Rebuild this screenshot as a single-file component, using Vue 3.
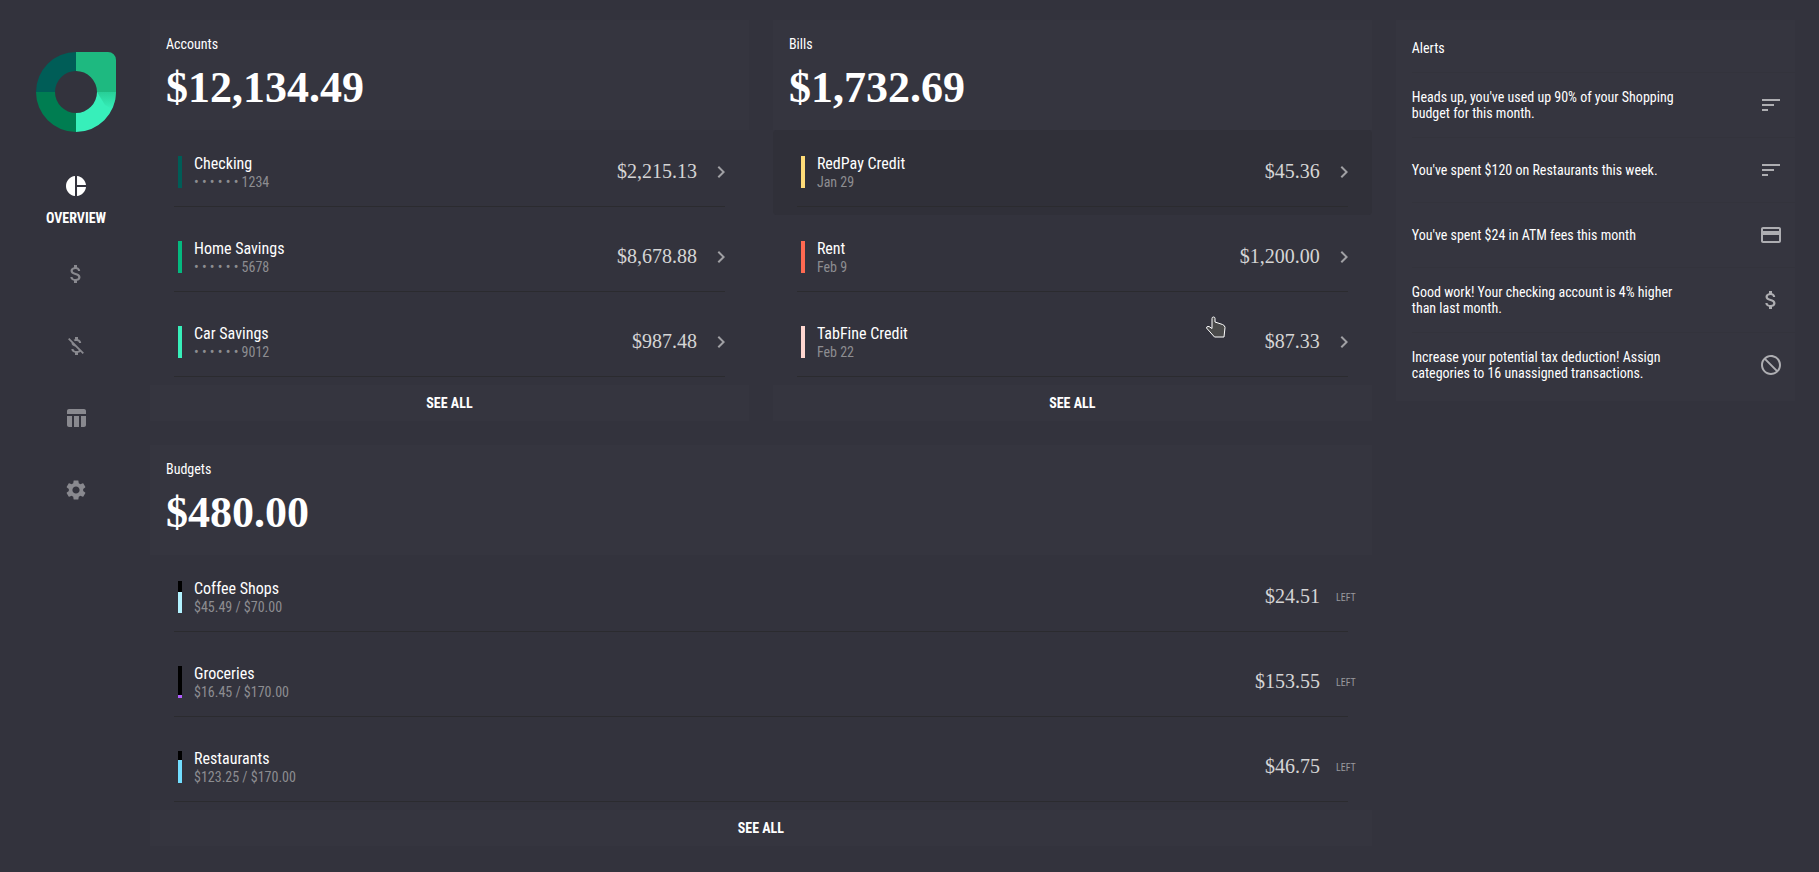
<script setup>
const nav = [
  { id: 'accounts', label: 'Accounts', icon: 'money' },
  { id: 'bills', label: 'Bills', icon: 'moneyOff' },
  { id: 'budgets', label: 'Budgets', icon: 'table' },
  { id: 'settings', label: 'Settings', icon: 'settings' }
]

const icons = {
  pie: 'M11 2v20c-5.07-.5-9-4.79-9-10s3.93-9.5 9-10zm2.03 0v8.99H22c-.47-4.74-4.24-8.52-8.97-8.99zm0 11.01V22c4.74-.47 8.5-4.25 8.97-8.99h-8.97z',
  money: 'M11.8 10.9c-2.27-.59-3-1.2-3-2.15 0-1.09 1.01-1.85 2.7-1.85 1.78 0 2.44.85 2.5 2.1h2.21c-.07-1.72-1.12-3.3-3.21-3.81V3h-3v2.16c-1.94.42-3.5 1.68-3.5 3.61 0 2.31 1.91 3.46 4.7 4.13 2.5.6 3 1.48 3 2.41 0 .69-.49 1.79-2.7 1.79-2.06 0-2.87-.92-2.98-2.1h-2.2c.12 2.19 1.76 3.42 3.68 3.83V21h3v-2.15c1.95-.37 3.5-1.5 3.5-3.55 0-2.84-2.43-3.81-4.7-4.4z',
  moneyOff: 'M12.5 6.9c1.78 0 2.44.85 2.5 2.1h2.21c-.07-1.72-1.12-3.3-3.21-3.81V3h-3v2.16c-.53.12-1.03.3-1.48.54l1.47 1.47c.41-.17.91-.27 1.51-.27zM5.33 4.06L4.06 5.33 7.5 8.77c0 2.08 1.56 3.21 3.91 3.91l3.51 3.51c-.34.48-1.05.91-2.42.91-2.06 0-2.87-.92-2.98-2.1h-2.2c.12 2.19 1.76 3.42 3.68 3.83V21h3v-2.15c.96-.18 1.82-.55 2.45-1.12l2.22 2.22 1.27-1.27L5.33 4.06z',
  table: 'M10 10.02h5V21h-5V10.02zM17 21h3c1.1 0 2-.9 2-2v-9h-5v11zm3-18H5c-1.1 0-2 .9-2 2v3h19V5c0-1.1-.9-2-2-2zM3 19c0 1.1.9 2 2 2h3V10H3v9z',
  settings: 'M19.14 12.94c.04-.3.06-.61.06-.94 0-.32-.02-.64-.07-.94l2.03-1.58c.18-.14.23-.41.12-.61l-1.92-3.32c-.12-.22-.37-.29-.59-.22l-2.39.96c-.5-.38-1.03-.7-1.62-.94l-.36-2.54c-.04-.24-.24-.41-.48-.41h-3.84c-.24 0-.43.17-.47.41l-.36 2.54c-.59.24-1.13.57-1.62.94l-2.39-.96c-.22-.08-.47 0-.59.22L2.74 8.87c-.12.21-.08.47.12.61l2.03 1.58c-.05.3-.09.63-.09.94s.02.64.07.94l-2.03 1.58c-.18.14-.23.41-.12.61l1.92 3.32c.12.22.37.29.59.22l2.39-.96c.5.38 1.03.7 1.62.94l.36 2.54c.05.24.24.41.48.41h3.84c.24 0 .44-.17.47-.41l.36-2.54c.59-.24 1.13-.56 1.62-.94l2.39.96c.22.08.47 0 .59-.22l1.92-3.32c.12-.22.07-.47-.12-.61l-2.01-1.58zM12 15.6c-1.98 0-3.6-1.62-3.6-3.6s1.62-3.6 3.6-3.6 3.6 1.62 3.6 3.6-1.62 3.6-3.6 3.6z',
  sort: 'M3 18h6v-2H3v2zM3 6v2h18V6H3zm0 7h12v-2H3v2z',
  card: 'M20 4H4c-1.11 0-1.99.89-1.99 2L2 18c0 1.11.89 2 2 2h16c1.11 0 2-.89 2-2V6c0-1.11-.89-2-2-2zm0 14H4v-6h16v6zm0-10H4V6h16v2z',
  blocked: 'M12 2C6.48 2 2 6.48 2 12s4.48 10 10 10 10-4.48 10-10S17.52 2 12 2zM4 12c0-1.85.63-3.55 1.69-4.9L16.9 18.31C15.55 19.37 13.85 20 12 20c-4.42 0-8-3.58-8-8zm14.31 4.9L7.1 5.69C8.45 4.63 10.15 4 12 4c4.42 0 8 3.58 8 8 0 1.85-.63 3.55-1.69 4.9z',
  chevron: 'M10 6L8.59 7.41 13.17 12l-4.58 4.59L10 18l6-6z'
}

const cards = [
  {
    title: 'Accounts',
    total: '$12,134.49',
    rows: [
      { name: 'Checking', detail: '• • • • • • 1234', amount: '$2,215.13', color: '#005d57' },
      { name: 'Home Savings', detail: '• • • • • • 5678', amount: '$8,678.88', color: '#04b97f' },
      { name: 'Car Savings', detail: '• • • • • • 9012', amount: '$987.48', color: '#37efba' }
    ]
  },
  {
    title: 'Bills',
    total: '$1,732.69',
    rows: [
      { name: 'RedPay Credit', detail: 'Jan 29', amount: '$45.36', color: '#ffdc78', active: true },
      { name: 'Rent', detail: 'Feb 9', amount: '$1,200.00', color: '#ff6951' },
      { name: 'TabFine Credit', detail: 'Feb 22', amount: '$87.33', color: '#ffd7d0' }
    ]
  },
  {
    title: 'Budgets',
    total: '$480.00',
    wide: true,
    rows: [
      { name: 'Coffee Shops', detail: '$45.49 / $70.00', amount: '$24.51', color: '#b2f2ff', used: 45.49 / 70 },
      { name: 'Groceries', detail: '$16.45 / $170.00', amount: '$153.55', color: '#b15dff', used: 16.45 / 170 },
      { name: 'Restaurants', detail: '$123.25 / $170.00', amount: '$46.75', color: '#72deff', used: 123.25 / 170 }
    ]
  }
]

const alerts = [
  { text: "Heads up, you've used up 90% of your Shopping budget for this month.", icon: 'sort' },
  { text: "You've spent $120 on Restaurants this week.", icon: 'sort' },
  { text: "You've spent $24 in ATM fees this month", icon: 'card' },
  { text: 'Good work! Your checking account is 4% higher than last month.', icon: 'money' },
  { text: 'Increase your potential tax deduction! Assign categories to 16 unassigned transactions.', icon: 'blocked' }
]

const barStyle = (row) => ({
  height: `${(row.used ?? 1) * 100}%`,
  backgroundColor: row.color
})
</script>

<template>
  <div class="app">
    <nav class="sidebar">
      <svg class="logo" viewBox="0 0 80 80" aria-hidden="true">
        <defs>
          <linearGradient id="fold" x1="0" y1="0" x2="0" y2="1">
            <stop offset="0" stop-color="#1eb980" stop-opacity="0.6" />
            <stop offset="1" stop-color="#1eb980" stop-opacity="0" />
          </linearGradient>
        </defs>
        <path fill="#005d57" d="M40 0A40 40 0 0 0 0 40H19A21 21 0 0 1 40 19Z" />
        <path fill="#1eb980" d="M40 0H72A8 8 0 0 1 80 8V40H61A21 21 0 0 0 40 19Z" />
        <path fill="#007d51" d="M0 40A40 40 0 0 0 40 80V61A21 21 0 0 1 19 40Z" />
        <path fill="#37efba" d="M80 40A40 40 0 0 1 40 80V61A21 21 0 0 0 61 40Z" />
        <path fill="url(#fold)" d="M61 40H80A40 40 0 0 1 76 57L69 53Z" />
      </svg>
      <a class="nav-item current" href="#overview">
        <svg class="icon" viewBox="0 0 24 24" aria-hidden="true"><path :d="icons.pie" /></svg>
        <span>OVERVIEW</span>
      </a>
      <a v-for="item in nav" :key="item.id" class="nav-item" :href="`#${item.id}`" :aria-label="item.label">
        <svg class="icon" viewBox="0 0 24 24" aria-hidden="true"><path :d="icons[item.icon]" /></svg>
      </a>
    </nav>

    <main class="board">
      <section v-for="card in cards" :key="card.title" class="card" :class="{ wide: card.wide }">
        <header class="card-head">
          <h2 class="card-title">{{ card.title }}</h2>
          <p class="total">{{ card.total }}</p>
        </header>
        <ul class="rows">
          <li v-for="row in card.rows" :key="row.name">
            <a class="row" :class="{ active: row.active }" href="#detail">
              <span class="row-main">
                <span class="bar"><span class="fill" :style="barStyle(row)"></span></span>
                <span class="label">
                  <span class="name">{{ row.name }}</span>
                  <span class="detail">{{ row.detail }}</span>
                </span>
                <span class="amount">{{ row.amount }}</span>
                <span v-if="card.wide" class="left">LEFT</span>
                <svg v-else class="icon chevron" viewBox="0 0 24 24" aria-hidden="true"><path :d="icons.chevron" /></svg>
              </span>
            </a>
          </li>
        </ul>
        <button class="see-all" type="button">SEE ALL</button>
      </section>

      <aside class="alerts">
        <h2 class="alerts-title">Alerts</h2>
        <ul class="alert-list">
          <li v-for="alert in alerts" :key="alert.text" class="alert">
            <p>{{ alert.text }}</p>
            <svg class="icon" viewBox="0 0 24 24" aria-hidden="true"><path :d="icons[alert.icon]" /></svg>
          </li>
        </ul>
      </aside>
    </main>

    <svg class="pointer" viewBox="0 0 22 22" aria-hidden="true">
      <path d="M7 12.5V2.5Q7 1 8.5 1T10 2.5V6L17.5 8.5Q20 9.5 20 11.5L19 21H9.5L1.5 12Q1.5 10 4 10.5Z" />
    </svg>
  </div>
</template>

<style>
body {
  background: #33333d;
}
</style>

<style scoped>
.app {
  position: relative;
  display: grid;
  grid-template-columns: 150px minmax(0, 1fr);
  min-height: 100vh;
  background: #33333d;
  color: #fff;
  font-family: "Roboto Condensed", "Liberation Sans Narrow", Roboto, sans-serif;
  font-size: 14px;
  font-weight: 400;
}

h2,
p,
ul {
  margin: 0;
  padding: 0;
}

ul {
  list-style: none;
}

a {
  color: inherit;
  text-decoration: none;
}

.icon {
  display: block;
  flex: none;
  width: 24px;
  height: 24px;
  fill: currentColor;
}

.sidebar {
  display: flex;
  flex-direction: column;
  align-items: center;
  padding: 52px 0 0 2px;
}

.logo {
  width: 80px;
  height: 80px;
  margin-bottom: 42px;
}

.nav-item {
  display: flex;
  flex-direction: column;
  align-items: center;
  padding: 24px 0;
  color: #89898f;
}

.current {
  gap: 12px;
  padding: 0 0 12px;
  color: #fff;
  font-weight: 700;
  line-height: 16px;
}

.board {
  display: grid;
  grid-template-columns: 3fr 3fr 2fr;
  align-content: start;
  align-items: start;
  gap: 24px;
  padding: 20px 24px 24px 0;
}

.wide {
  grid-column: 1 / 3;
}

.card-head,
.see-all,
.alerts {
  background: #35353f;
}

.card-head {
  height: 94px;
  padding: 16px 16px 0;
}

.card-title,
.alerts-title {
  font-size: 14px;
  font-weight: 400;
  line-height: 16px;
}

.total {
  margin-top: 8px;
  font-family: "Liberation Serif", serif;
  font-size: 44px;
  font-weight: 700;
  line-height: 56px;
}

.row {
  display: block;
  padding: 0 24px 8px;
}

.active {
  border-radius: 4px;
  background: #303039;
}

.row-main {
  display: flex;
  align-items: center;
  height: 77px;
  padding: 8px 0 0 4px;
  box-sizing: border-box;
  border-bottom: 1px solid #2b2b2f;
}

.bar {
  display: flex;
  align-items: flex-end;
  width: 4px;
  height: 32px;
  margin-right: 12px;
  background: #000;
}

.fill {
  width: 100%;
}

.label {
  display: flex;
  flex: 1;
  flex-direction: column;
  padding-top: 2px;
  line-height: 18px;
  white-space: pre;
}

.name {
  font-size: 16px;
}

.detail {
  color: #8d8d91;
}

.amount {
  padding-bottom: 2px;
  color: #d5d5d5;
  font-family: "Liberation Serif", serif;
  font-size: 20px;
  line-height: 24px;
}

.chevron {
  margin: 0 -8px 0 12px;
  color: #a0a0a4;
}

.left {
  margin: 0 -8px 0 16px;
  color: #98989c;
  font-size: 10px;
}

.see-all {
  display: block;
  width: 100%;
  height: 36px;
  padding: 0;
  border: 0;
  color: #fff;
  font: inherit;
  font-weight: 700;
}

.alerts {
  grid-column: 3;
  grid-row: 1;
  padding: 0 0 4px 16px;
}

.alerts-title {
  padding: 20px 0 16px;
}

.alert {
  display: flex;
  align-items: center;
  justify-content: space-between;
  gap: 24px;
  height: 64px;
  padding-right: 12px;
  border-top: 1px solid #33333c;
}

.alert p {
  max-width: 268px;
  line-height: 16px;
}

.alert .icon {
  color: #aeaeb2;
}

.pointer {
  position: absolute;
  top: 316px;
  left: 1205px;
  width: 22px;
  height: 22px;
  fill: #4a4a4a;
  stroke: #fff;
}
</style>
